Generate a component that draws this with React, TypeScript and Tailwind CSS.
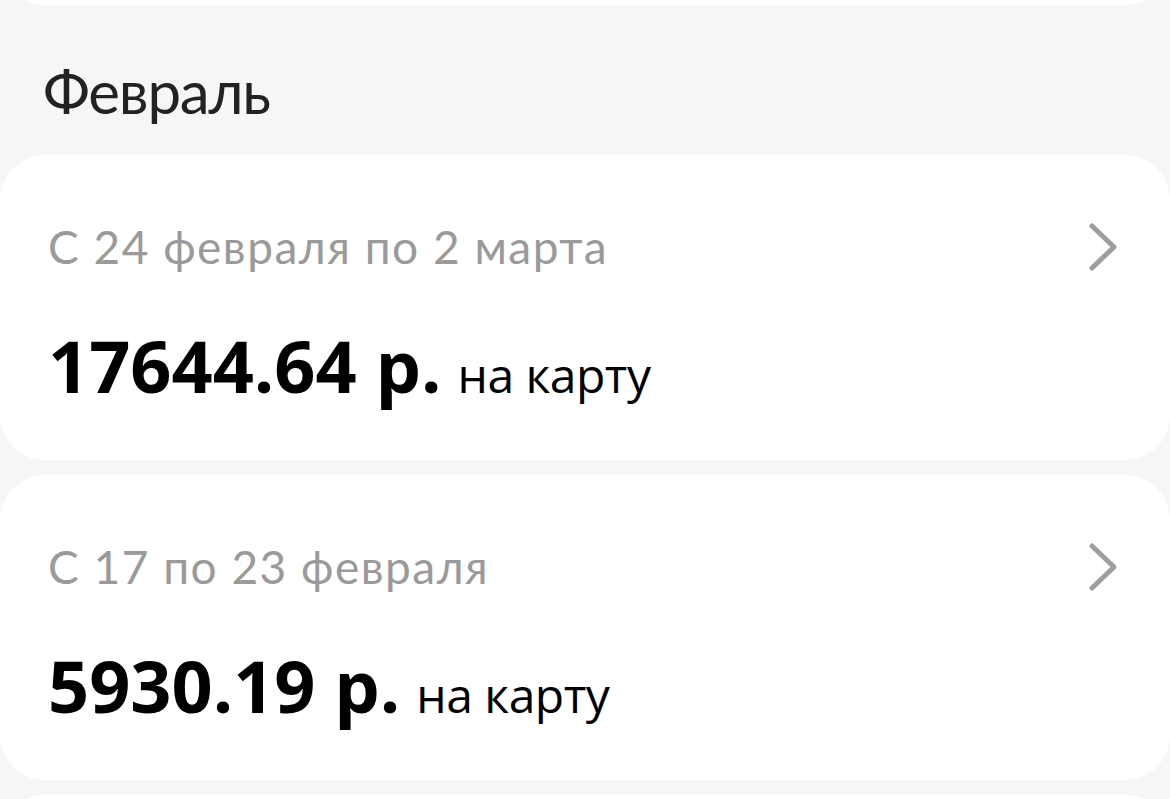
export default function App() {
  const items = [
    { range: "С 24 февраля по 2 марта", amount: "17644.64 р." },
    { range: "С 17 по 23 февраля", amount: "5930.19 р." },
  ];

  return (
    <div className="h-[799px] overflow-hidden bg-[#f6f6f6]">
      {/* previous month card, mostly scrolled away */}
      <div className="-mt-[300px] h-[305px] rounded-[45px] bg-white" />

      <h2 className="pl-[43px] pt-[56px] pb-[34px] text-[60px] leading-[60px] tracking-[-1.2px] text-[#222] font-['Lato',sans-serif]">
        Февраль
      </h2>

      <div className="flex flex-col gap-[15px]">
        {items.map((item) => (
          <div key={item.range} className="h-[305px] rounded-[45px] bg-white pl-[48px] pr-[52px] pt-[67px]">
            <div className="flex h-[50px] items-center justify-between">
              <span className="text-[46px] leading-[46px] tracking-[1.5px] text-[#9a9a9a] font-['Lato',sans-serif]">
                {item.range}
              </span>
              <svg width="30" height="50" viewBox="0 0 30 50" fill="none">
                <polyline
                  points="4,4 26,25 4,46"
                  stroke="#9e9e9e"
                  strokeWidth="5"
                  strokeLinecap="round"
                  strokeLinejoin="round"
                />
              </svg>
            </div>
            <div className="mt-[57px] flex items-baseline gap-[16px] font-['Open_Sans',sans-serif] text-black">
              <span className="text-[72px] leading-[72px] font-bold">{item.amount}</span>
              <span className="text-[48px] leading-[48px] tracking-[-0.5px]">на карту</span>
            </div>
          </div>
        ))}
        <div className="h-[305px] rounded-[45px] bg-white" />
      </div>
    </div>
  );
}
